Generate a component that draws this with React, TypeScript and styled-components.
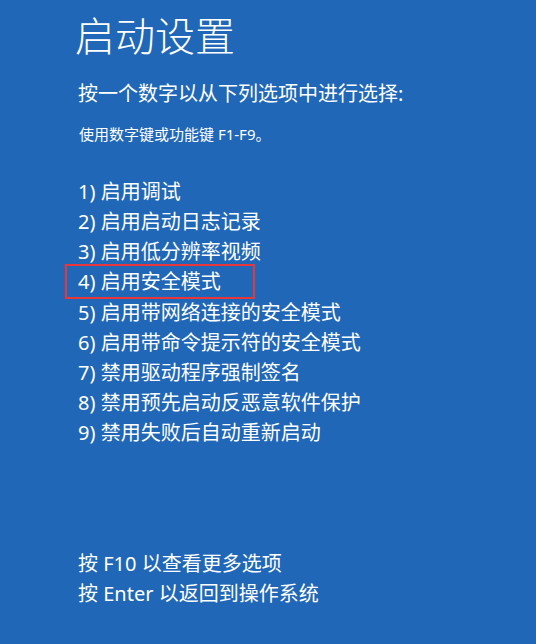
import { createGlobalStyle } from "styled-components";
import styled from "styled-components";

const GlobalStyle = createGlobalStyle`
  html, body {
    margin: 0;
    padding: 0;
    background: #2067b7;
  }
  body {
    font-family: "Noto Sans", "Noto Sans CJK SC", sans-serif;
    color: #ffffff;
  }
`;

const Screen = styled.div`
  width: 536px;
  height: 644px;
  box-sizing: border-box;
  padding: 12px 0 0 78px;
  background: #2067b7;
  overflow: hidden;
`;

const Title = styled.h1`
  margin: 0 0 0 -3px;
  font-size: 40px;
  line-height: 48px;
  font-weight: 300;
`;

const Prompt = styled.div`
  margin-top: 20px;
  font-size: 20px;
  line-height: 28px;
  font-weight: 400;
`;

const Hint = styled.div`
  margin-top: 16px;
  margin-left: 1px;
  font-size: 15px;
  line-height: 20px;
  font-weight: 400;
`;

const OptionList = styled.ol`
  list-style: none;
  margin: 33px 0 0;
  padding: 0;
`;

const Option = styled.li`
  font-size: 20px;
  line-height: 30px;
  font-weight: 400;
  white-space: nowrap;
`;

const Selected = styled.span`
  display: inline-block;
  margin: -3px 0 -1px -13px;
  padding: 1px 32px 0 11px;
  border: 2px solid #e8363b;
`;

const Footer = styled.div`
  margin-top: 101px;
`;

const FooterLine = styled.div`
  font-size: 20px;
  line-height: 30px;
  font-weight: 400;
`;

const options = [
  "启用调试",
  "启用启动日志记录",
  "启用低分辨率视频",
  "启用安全模式",
  "启用带网络连接的安全模式",
  "启用带命令提示符的安全模式",
  "禁用驱动程序强制签名",
  "禁用预先启动反恶意软件保护",
  "禁用失败后自动重新启动",
];

export default function App() {
  return (
    <>
      <GlobalStyle />
      <Screen>
        <Title>启动设置</Title>
        <Prompt>按一个数字以从下列选项中进行选择:</Prompt>
        <Hint>使用数字键或功能键 F1-F9。</Hint>
        <OptionList>
          {options.map((text, i) => {
            const label = `${i + 1}) ${text}`;
            return (
              <Option key={i}>
                {i === 3 ? <Selected>{label}</Selected> : label}
              </Option>
            );
          })}
        </OptionList>
        <Footer>
          <FooterLine>按 F10 以查看更多选项</FooterLine>
          <FooterLine>按 Enter 以返回到操作系统</FooterLine>
        </Footer>
      </Screen>
    </>
  );
}
